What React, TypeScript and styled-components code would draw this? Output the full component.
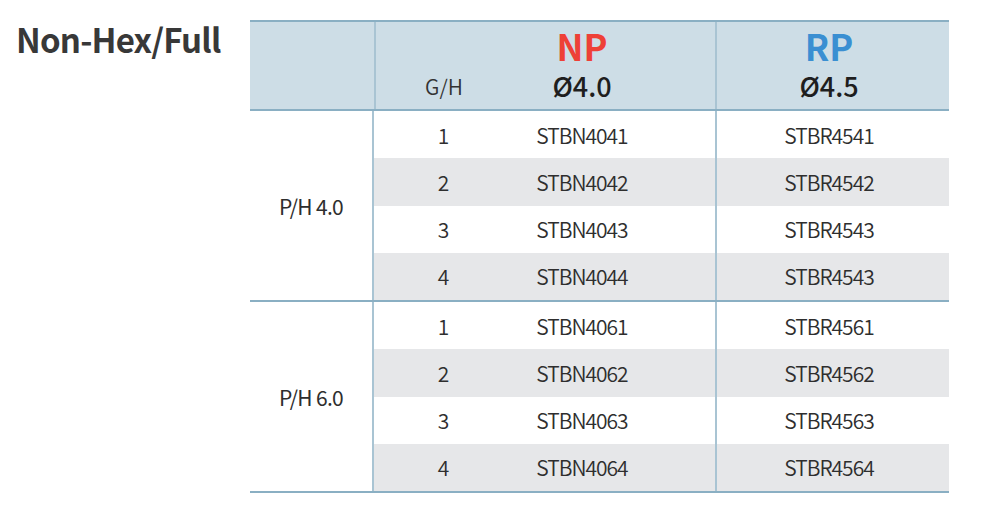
import React from 'react';
import styled, { createGlobalStyle } from 'styled-components';

const GlobalStyle = createGlobalStyle`
  html, body {
    margin: 0;
    padding: 0;
    background: #ffffff;
  }
  body {
    font-family: 'Noto Sans CJK KR', 'Noto Sans', sans-serif;
    color: #333333;
  }
`;

const groups = [
  {
    label: 'P/H 4.0',
    rows: [
      ['1', 'STBN4041', 'STBR4541'],
      ['2', 'STBN4042', 'STBR4542'],
      ['3', 'STBN4043', 'STBR4543'],
      ['4', 'STBN4044', 'STBR4543'],
    ],
  },
  {
    label: 'P/H 6.0',
    rows: [
      ['1', 'STBN4061', 'STBR4561'],
      ['2', 'STBN4062', 'STBR4562'],
      ['3', 'STBN4063', 'STBR4563'],
      ['4', 'STBN4064', 'STBR4564'],
    ],
  },
];

export default function App() {
  return (
    <>
      <GlobalStyle />
      <Page>
        <Title>Non-Hex/Full</Title>
        <Table>
          <Header>
            <HeadCell />
            <HeadCell divided>
              <GH>G/H</GH>
            </HeadCell>
            <HeadCell shift={63}>
              <Code color="#ee4037">NP</Code>
              <Size>Ø4.0</Size>
            </HeadCell>
            <HeadCell divided shift={8}>
              <Code color="#3a8fd2">RP</Code>
              <Size>Ø4.5</Size>
            </HeadCell>
          </Header>
          {groups.map((g, gi) => (
            <Group key={g.label} first={gi === 0}>
              <GroupLabel>{g.label}</GroupLabel>
              <Rows>
                {g.rows.map((r, ri) => (
                  <Row key={ri} shaded={ri % 2 === 1}>
                    <Cell>{r[0]}</Cell>
                    <Cell shift={63}>{r[1]}</Cell>
                    <Cell divided shift={8}>{r[2]}</Cell>
                  </Row>
                ))}
              </Rows>
            </Group>
          ))}
        </Table>
      </Page>
    </>
  );
}

const Page = styled.div`
  display: flex;
  align-items: flex-start;
  padding: 20px 0 0 16px;
`;

const Title = styled.h1`
  width: 234px;
  margin: 0;
  font-size: 33px;
  line-height: 1.2;
  font-weight: 700;
  color: #383838;
  letter-spacing: -0.8px;
`;

const Table = styled.div`
  width: 699px;
  border-top: 2px solid #8aafc3;
  border-bottom: 2px solid #8aafc3;
`;

const Header = styled.div`
  display: grid;
  grid-template-columns: 124px 138px 203px 234px;
  height: 87px;
  background: #cddde6;
  border-bottom: 2px solid #8aafc3;
`;

const HeadCell = styled.div<{ divided?: boolean; shift?: number }>`
  display: flex;
  flex-direction: column;
  align-items: center;
  justify-content: flex-end;
  gap: 9px;
  padding-bottom: 10px;
  border-left: ${({ divided }) => (divided ? '2px solid #a9c4d3' : 'none')};
  padding-right: ${({ shift }) => shift || 0}px;
`;

const GH = styled.div`
  font-size: 21px;
  line-height: 26px;
  font-weight: 350;
  color: #333333;
`;

const Code = styled.div<{ color: string }>`
  font-size: 36px;
  line-height: 36px;
  font-weight: 700;
  color: ${({ color }) => color};
`;

const Size = styled.div`
  font-size: 27px;
  line-height: 27px;
  font-weight: 500;
  color: #1e1e1e;
`;

const Group = styled.div<{ first?: boolean }>`
  display: flex;
  border-top: ${({ first }) => (first ? 'none' : '2px solid #8aafc3')};
`;

const GroupLabel = styled.div`
  width: 122px;
  display: flex;
  align-items: center;
  justify-content: center;
  font-size: 21px;
  font-weight: 400;
  letter-spacing: -0.7px;
  color: #2e2e2e;
  border-right: 2px solid #a9c4d3;
`;

const Rows = styled.div`
  flex: 1;
  display: flex;
  flex-direction: column;
`;

const Row = styled.div<{ shaded?: boolean }>`
  display: grid;
  grid-template-columns: 138px 203px 234px;
  height: 47.25px;
  background: ${({ shaded }) => (shaded ? '#e6e7e9' : '#ffffff')};
`;

const Cell = styled.div<{ divided?: boolean; shift?: number }>`
  display: flex;
  align-items: center;
  justify-content: center;
  font-size: 21px;
  font-weight: 350;
  letter-spacing: -1px;
  color: #2e2e2e;
  border-left: ${({ divided }) => (divided ? '2px solid #a9c4d3' : 'none')};
  padding-right: ${({ shift }) => shift || 0}px;
`;
